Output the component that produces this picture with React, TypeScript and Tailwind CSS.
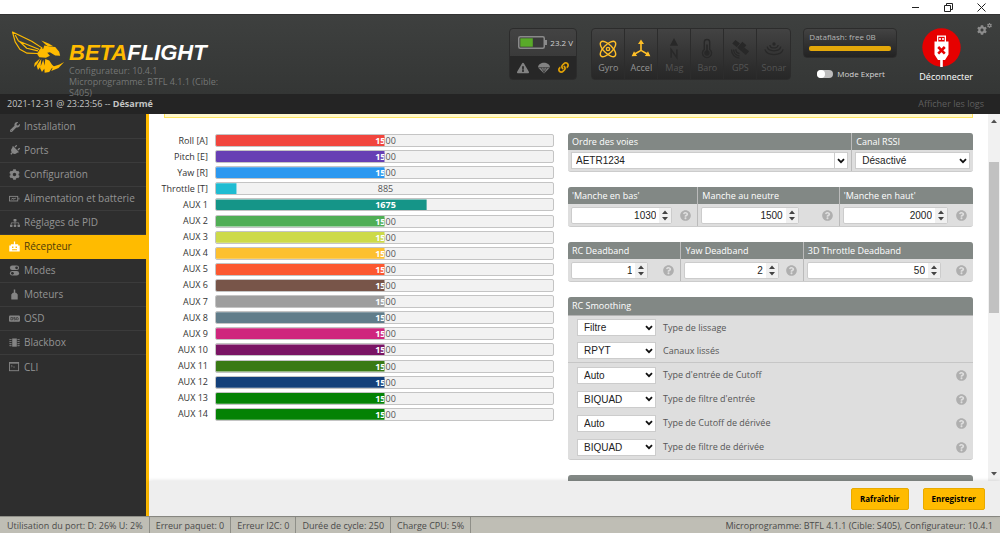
import { useState } from 'react'
import type { ReactNode } from 'react'
import { FaCog, FaExclamationTriangle, FaLink, FaPlug, FaQuestionCircle, FaSitemap, FaWrench } from 'react-icons/fa'

const CHANNEL_MIN = 800
const CHANNEL_MAX = 2200

const CHANNELS = [
  { name: 'Roll [A]', value: 1500, color: '#f1453d' },
  { name: 'Pitch [E]', value: 1500, color: '#673fb4' },
  { name: 'Yaw [R]', value: 1500, color: '#2b98f0' },
  { name: 'Throttle [T]', value: 885, color: '#1fbcd2' },
  { name: 'AUX 1', value: 1675, color: '#159588' },
  { name: 'AUX 2', value: 1500, color: '#50ae55' },
  { name: 'AUX 3', value: 1500, color: '#cdda49' },
  { name: 'AUX 4', value: 1500, color: '#fdc02f' },
  { name: 'AUX 5', value: 1500, color: '#fc5830' },
  { name: 'AUX 6', value: 1500, color: '#785549' },
  { name: 'AUX 7', value: 1500, color: '#9e9e9e' },
  { name: 'AUX 8', value: 1500, color: '#617d8a' },
  { name: 'AUX 9', value: 1500, color: '#cf267d' },
  { name: 'AUX 10', value: 1500, color: '#7a1464' },
  { name: 'AUX 11', value: 1500, color: '#3a7a14' },
  { name: 'AUX 12', value: 1500, color: '#14407a' },
  { name: 'AUX 13', value: 1500, color: '#048204' },
  { name: 'AUX 14', value: 1500, color: '#048204' },
]

function BatteryTabIcon() {
  return (
    <svg viewBox="0 0 12 8" className="w-full" fill="none" stroke="currentColor">
      <rect x="0.5" y="1.5" width="9" height="5" />
      <path d="M10.8 3v2M2.5 4.6l2-1.2v1.2l3-1.2" />
    </svg>
  )
}

function ReceiverIcon() {
  return (
    <svg viewBox="0 0 12 12" className="w-full" fill="currentColor">
      <path d="M5.300 0.500h1.400V3.500H10v1.500h1.700v6.500H0.300V5H2V3.500h3.300z" />
      <path d="M3.300 6h1.500v1.500H3.300zM7.200 6h1.500v1.500H7.200zM3.300 9h5.400v1H3.300z" fill="#ffbb00" />
    </svg>
  )
}

function ModesIcon() {
  return (
    <svg viewBox="0 0 12 12" className="w-full">
      <rect x="1" y="0.5" width="10" height="5" rx="2.500" fill="currentColor" />
      <rect x="1" y="6.500" width="10" height="5" rx="2.500" fill="currentColor" />
      <circle cx="8.300" cy="3" r="1.500" fill="#2e2e2e" />
      <circle cx="3.700" cy="9" r="1.500" fill="#2e2e2e" />
    </svg>
  )
}

function MotorIcon() {
  return (
    <svg viewBox="0 0 12 12" className="w-full" fill="currentColor">
      <path d="M5.200 0.500h1.600v3.500h1l1.700 2v5.500h-7V6l1.700-2h1z" />
    </svg>
  )
}

function OsdIcon() {
  return (
    <svg viewBox="0 0 12 8" className="w-full">
      <rect x="0" y="0.500" width="12" height="7" rx="1.200" fill="currentColor" />
      <path d="M2 2.700h2v2.600H2zM7 2.700H5.200V4H7v1.300H5.200M8.300 2.700v2.600h1.200l.6-.6V3.300l-.6-.6z" fill="none" stroke="#2e2e2e" strokeWidth="0.700" />
    </svg>
  )
}

function BlackboxIcon() {
  return (
    <svg viewBox="0 0 12 10" className="w-full">
      <rect x="3.500" y="0.500" width="5" height="9" fill="currentColor" />
      <path d="M2 1v8M10 1v8" stroke="currentColor" strokeWidth="1.400" strokeDasharray="1.300 0.900" />
      <path d="M0.500 1v8M11.500 1v8" stroke="currentColor" strokeWidth="0.600" strokeDasharray="1.300 0.900" />
    </svg>
  )
}

function CliIcon() {
  return (
    <svg viewBox="0 0 12 10" className="w-full" fill="none" stroke="currentColor">
      <rect x="0.500" y="0.500" width="10" height="9" />
      <path d="M0.500 1.300h10" />
      <path d="M2.300 3.500l1.400 1-1.400 1M4.500 5.500h2" strokeWidth="0.700" />
    </svg>
  )
}

const TABS: { label: string; icon: ReactNode }[] = [
  { label: 'Installation', icon: <FaWrench /> },
  { label: 'Ports', icon: <FaPlug className="size-[11px] rotate-45" /> },
  { label: 'Configuration', icon: <FaCog className="size-[11px]" /> },
  { label: 'Alimentation et batterie', icon: <BatteryTabIcon /> },
  { label: 'Réglages de PID', icon: <FaSitemap /> },
  { label: 'Récepteur', icon: <ReceiverIcon /> },
  { label: 'Modes', icon: <ModesIcon /> },
  { label: 'Moteurs', icon: <MotorIcon /> },
  { label: 'OSD', icon: <OsdIcon /> },
  { label: 'Blackbox', icon: <BlackboxIcon /> },
  { label: 'CLI', icon: <CliIcon /> },
]

const SENSORS: { label: string; on: boolean; icon: ReactNode }[] = [
  {
    label: 'Gyro',
    on: true,
    icon: (
      <>
        <ellipse cx="10" cy="10" rx="11" ry="4.800" transform="rotate(45 10 10)" />
        <ellipse cx="10" cy="10" rx="11" ry="4.800" transform="rotate(-45 10 10)" />
        <circle cx="10" cy="10" r="1.800" />
      </>
    ),
  },
  {
    label: 'Accel',
    on: true,
    icon: (
      <>
        <path d="M10 3v8.500M10 11.500l-7 4M10 11.500l7 4" strokeWidth="1.800" />
        <path d="M10 -0.500l3.300 5H6.700zM-0.300 18l2.600-5.400 3.400 5.200zM20.300 18l-2.600-5.400-3.400 5.200z" fill="currentColor" stroke="none" />
      </>
    ),
  },
  {
    label: 'Mag',
    on: false,
    icon: (
      <>
        <path d="M10 -2l4.500 8.500h-9z" fill="currentColor" stroke="none" />
        <path d="M6.800 19.500v-9l6.400 9v-9" strokeWidth="1.600" />
      </>
    ),
  },
  {
    label: 'Baro',
    on: false,
    icon: (
      <>
        <path d="M7 10.500V2.500a3 3 0 0 1 6 0v8a5 5 0 1 1-6 0z" />
        <circle cx="10" cy="14.500" r="3" fill="currentColor" stroke="none" />
        <path d="M10 5v9" strokeWidth="1.800" />
      </>
    ),
  },
  {
    label: 'GPS',
    on: false,
    icon: (
      <>
        <path d="M5 0l5 4-3.500 4-5-4zM15 8.500l5 4-3.500 4-5-4zM12.500 2l4.500 4-5.500 6.500-4.500-4z" fill="currentColor" stroke="none" />
        <path d="M5.500 10.500a4 4 0 0 0 4 4.500M3 10.500a7 7 0 0 0 6.500 7.200M0.700 10.500a9 9 0 0 0 8.800 9.500" />
      </>
    ),
  },
  {
    label: 'Sonar',
    on: false,
    icon: (
      <>
        <ellipse cx="10" cy="4.500" rx="1.800" ry="2" fill="currentColor" stroke="none" />
        <path d="M5.500 5.500c0 4.500 9 4.500 9 0M2.500 7.500c1 6 14 6 15 0M0 10.500c2 7.500 18 7.500 20 0" strokeWidth="1.400" />
      </>
    ),
  },
]

function BeeLogo() {
  return (
    <svg viewBox="33 92 162 130" className="h-[43px] w-[54px] shrink-0" fill="#ffbb00">
      <path
        d="M37 95l58 28 31 20-13 17-32-1-22-12-14-22zM45 104l10 18 63 26M56 122l24 22 34 8"
        fill="none"
        stroke="#ffbb00"
        strokeWidth="3.500"
        strokeLinejoin="round"
      />
      <path d="M124 121l22 9 14 8h-16l-8-6z" />
      <path d="M133 136l17 3 16 1 12 15 3 12-15-1-16-10-8 2 8 9-12 6-20-2-6-8 10-18 8 1z" />
      <path d="M120 175l-16 14-2 12 10-10zM124 177l-14 20 4 13 8-11zM130 179l-10 25 6 12 9-13zM136 177l-3 26 1 15 14-2 8-12 8-3-8-8-8-12zM160 199l-6 14 22-9 17-18-14 7z" />
    </svg>
  )
}

function Help() {
  return (
    <button type="button" aria-label="Aide" className="shrink-0 text-[#afafaf]">
      <FaQuestionCircle className="size-[11px]" />
    </button>
  )
}

function Chevron() {
  return (
    <svg viewBox="0 0 8 6" className="h-[6px] w-2" fill="none" stroke="#111" strokeWidth="1.800">
      <path d="M1 1.200l3 3 3-3" />
    </svg>
  )
}

function Select({ label, value, className = '' }: { label: string; value: string; className?: string }) {
  return (
    <div className={`relative flex items-center ${className}`}>
      <select
        aria-label={label}
        className="h-[17px] w-full appearance-none border border-[#ccc] bg-white pl-1.5 font-['Liberation_Sans',Arial,sans-serif] text-[10px] leading-[15px] text-[#222]"
      >
        <option>{value}</option>
      </select>
      <span className="pointer-events-none absolute right-[3px]">
        <Chevron />
      </span>
    </div>
  )
}

function NumberField({ label, initial, gap }: { label: string; initial: number; gap: string }) {
  const [value, setValue] = useState(initial)
  return (
    <div className={`flex h-[22px] items-center pr-1.5 pl-[3px] ${gap}`}>
      <div className="flex h-[17px] min-w-0 flex-1 rounded-[2px] border border-[#ccc] bg-white">
        <input
          type="number"
          aria-label={label}
          value={value}
          onChange={(e) => setValue(Number(e.target.value))}
          className="w-0 min-w-0 flex-1 pr-[3px] text-right font-['Liberation_Sans',Arial,sans-serif] text-[10px] leading-[15px] text-[#222] [appearance:textfield] [&::-webkit-inner-spin-button]:appearance-none"
        />
        <svg viewBox="0 0 12 14" className="w-3 shrink-0 bg-[#f0f0f0]" fill="#444">
          <path d="M3 5.500L6 2l3 3.500zM3 8.500L6 12l3-3.500z" />
        </svg>
      </div>
      <Help />
    </div>
  )
}

function Column({ title, className, children }: { title: string; className: string; children: ReactNode }) {
  return (
    <div className={`min-w-0 border-r border-[#bbb] last:border-r-0 ${className}`}>
      <div className="h-[17px] truncate bg-[#828885] pl-1 text-[9px] leading-[17px] text-white">{title}</div>
      {children}
    </div>
  )
}

const PANEL = 'overflow-hidden rounded-[3px] border-b border-[#ccc] bg-[#dedede]'

function SmoothingRow({ value, label, help, className }: { value: string; label: string; help?: boolean; className: string }) {
  return (
    <div className={`flex items-center gap-[7px] pr-1.5 pl-[9px] ${className}`}>
      <Select label={label} value={value} className="w-[79px]" />
      <span className="flex-1 text-[9px] text-[#555]">{label}</span>
      {help && <Help />}
    </div>
  )
}

function ChannelBars() {
  return (
    <div className="mt-px flex h-[287px] flex-col justify-between text-[9px] leading-3">
      {CHANNELS.map((c) => {
        const pct = ((c.value - CHANNEL_MIN) / (CHANNEL_MAX - CHANNEL_MIN)) * 100
        return (
          <div key={c.name} className="flex h-[13px] items-center">
            <span className="flex w-[51px] shrink-0 justify-end pr-[7px] whitespace-nowrap text-[#333]">{c.name}</span>
            <div className="relative h-[13px] flex-1 rounded-[2px] border border-[#c4c4c4] bg-[#f2f2f2] pl-0.5 text-center text-[#555]">
              {c.value}
              <div
                className="absolute inset-0 rounded-[1px] pl-0.5 font-bold text-white"
                style={{ backgroundColor: c.color, clipPath: `inset(0 ${100 - pct}% 0 0)` }}
              >
                {c.value}
              </div>
            </div>
          </div>
        )
      })}
    </div>
  )
}

function Header() {
  return (
    <header className="relative z-10 flex h-20 shrink-0 items-start border-t border-[#333] bg-linear-to-b from-[#3e403f] to-[#343635] pl-[11px]">
      <div className="pt-4">
        <BeeLogo />
      </div>
      <div className="ml-1 w-[155px] pt-[26px]">
        <div className="font-['Liberation_Sans',Arial,sans-serif] text-[22px] leading-6 font-bold text-white italic">
          <span className="text-[#ffbb00]">BETA</span>FLIGHT
        </div>
        <div className="text-[9px] leading-[11px] text-[#747675]">
          Configurateur: 10.4.1
          <br />
          Microprogramme: BTFL 4.1.1 (Cible: S405)
        </div>
      </div>

      <div className="mt-[13px] ml-auto h-[52px] w-[68px] overflow-hidden rounded-[4px] border border-[#2c2c2c] bg-linear-to-b from-[#434343] to-[#333]">
        <div className="flex h-[27px] items-center gap-[3px] pl-2 text-[8px] text-[#d0d0d0]">
          <svg viewBox="0 0 29 13" className="h-[13px] w-[29px] shrink-0">
            <rect x="0.750" y="0.750" width="25.500" height="11.500" rx="1.500" fill="#3a3a3a" stroke="#8a8a8a" strokeWidth="1.500" />
            <rect x="27" y="4" width="2" height="5" fill="#8a8a8a" />
            <rect x="2.300" y="2.300" width="12.500" height="8.400" fill="#59aa29" />
          </svg>
          <span className="whitespace-nowrap">23.2 V</span>
        </div>
        <div className="flex h-[23px] items-center justify-between bg-[#272727] px-[7px] text-[#828282]">
          <FaExclamationTriangle className="size-3" />
          <svg viewBox="0 0 12 12" className="size-3" fill="currentColor">
            <path d="M0 5.500C0.500-0.700 11.500-0.700 12 5.500L6 11.500z" />
            <path d="M3 5.500l3 5M6 5.500v5M9 5.500l-3 5M0 5.700h12" stroke="#272727" strokeWidth="0.600" />
          </svg>
          <FaLink className="size-[11px] text-[#e0a006]" />
        </div>
      </div>

      <div className="mt-[13px] ml-3.5 flex h-[52px] overflow-hidden rounded-[4px] border border-[#2c2c2c] bg-linear-to-b from-[#434343] to-[#272727]">
        {SENSORS.map((s) => (
          <div key={s.label} className="flex w-[33px] flex-col items-center border-r border-[#2c2c2c] pt-2.5 last:border-r-0">
            <svg
              viewBox="-1 -1 22 22"
              className={`size-5 overflow-visible ${s.on ? 'text-[#ffbf27]' : 'text-[#282828]'}`}
              fill="none"
              stroke="currentColor"
              strokeWidth="1.500"
            >
              {s.icon}
            </svg>
            <span className={`text-[9px] leading-[18px] ${s.on ? 'text-[#949494]' : 'text-[#545454]'}`}>{s.label}</span>
          </div>
        ))}
      </div>

      <div className="mt-[13px] ml-3 w-[94px]">
        <div className="h-[30px] rounded-[4px] border border-[#2c2c2c] bg-linear-to-b from-[#434343] to-[#232323] px-[5px] pt-0.5">
          <div className="text-[8px] leading-3 whitespace-nowrap text-[#b5b5b5]">Dataflash: free 0B</div>
          <div className="mt-[3px] h-[5px] rounded-[2px] bg-[#e4a80a]" />
        </div>
        <label className="mt-2.5 flex items-center gap-1 pl-3.5 text-[8px] leading-3 text-[#d6d6d6]">
          <input type="checkbox" className="peer sr-only" />
          <span className="flex h-2 w-4 items-center rounded-full bg-[#bdbdbd]">
            <span className="size-2 rounded-full bg-white" />
          </span>
          Mode Expert
        </label>
      </div>

      <button type="button" className="mt-[13px] ml-[22px] flex flex-col items-start">
        <svg viewBox="0 0 39 39" className="ml-[3px] size-[39px]">
          <circle cx="19.500" cy="19.500" r="19.200" fill="#e60000" />
          <path d="M15 7.500h9v6h2.500v13l-3.500 5.500h-2.200v7h-2.600v-7H16l-3.500-5.500v-13H15z" fill="#fff" />
          <path d="M16.300 8.800h6.400v4.700h-6.400z" fill="#e60000" />
          <path d="M17.200 10h1.600v2h-1.600zM20.200 10h1.600v2h-1.600z" fill="#fff" />
          <path d="M16.200 19l6.600 6.600M22.800 19l-6.600 6.600" stroke="#e60000" strokeWidth="2.600" />
        </svg>
        <span className="mt-1 text-[9px] leading-3 text-white">Déconnecter</span>
      </button>
      <button type="button" aria-label="Options" className="mt-2 mr-2 ml-1 flex text-[#8c8c8c]">
        <FaCog className="mt-0.5 size-2.5" />
        <FaCog className="size-[5px]" />
      </button>
    </header>
  )
}

export default function App() {
  const [active, setActive] = useState('Récepteur')

  return (
    <div className="flex h-screen flex-col overflow-hidden bg-white font-['Open_Sans',sans-serif] text-[#333]">
      <div className="flex h-3.5 shrink-0 items-center justify-end gap-6 pr-3.5 text-[#222]">
        <button type="button" aria-label="Réduire">
          <svg viewBox="0 0 9 9" className="size-[9px]" fill="none" stroke="currentColor">
            <path d="M1 4.500h7" />
          </svg>
        </button>
        <button type="button" aria-label="Restaurer">
          <svg viewBox="0 0 9 9" className="size-[9px]" fill="none" stroke="currentColor">
            <path d="M0.500 2.500h6v6h-6zM2.500 2.500v-2h6v6h-2" />
          </svg>
        </button>
        <button type="button" aria-label="Fermer">
          <svg viewBox="0 0 9 9" className="size-[9px]" fill="none" stroke="currentColor">
            <path d="M0.500 0.500l8 8M8.500 0.500l-8 8" />
          </svg>
        </button>
      </div>

      <Header />

      <div className="flex h-5 shrink-0 items-center justify-between bg-[#242424] pr-4 pl-[7px] text-[9px] leading-3 text-[#c4c4c4]">
        <span>
          2021-12-31 @ 23:23:56 -- <b>Désarmé</b>
        </span>
        <a href="#logs" className="text-[#5f5f5f]">
          Afficher les logs
        </a>
      </div>

      <div className="flex min-h-0 flex-1">
        <nav className="w-[149px] shrink-0 border-r-[3px] border-[#ffbb00] bg-[#2e2e2e] pt-px">
          {TABS.map((tab) => (
            <a
              key={tab.label}
              href="#tab"
              onClick={() => setActive(tab.label)}
              className={`flex h-6 items-center gap-1 border-b pl-[9px] text-[10px] whitespace-nowrap last:border-b-0 ${
                tab.label === active
                  ? 'border-[#ffbb00] bg-[#ffbb00] text-[#4d3a0a]'
                  : 'border-[#3b3b3b] text-[#949494]'
              }`}
            >
              <span className={`flex w-[11px] justify-center ${tab.label === active ? 'text-white' : 'text-[#858585]'}`}>
                {tab.icon}
              </span>
              {tab.label}
            </a>
          ))}
        </nav>

        <main className="flex min-w-0 flex-1 flex-col">
          <div className="flex min-h-0 flex-1">
            <div className="min-w-0 flex-1 overflow-hidden px-[15px]">
              <div className="h-1 border-x border-b border-[#ffe55f] bg-[#fff7cd]" />

              <div className="grid grid-cols-[390fr_405fr] gap-3.5 pt-[15px]">
                <ChannelBars />

                <div className="flex flex-col gap-[15px]">
                  <div className={`flex ${PANEL}`}>
                    <Column title="Ordre des voies" className="flex-[284]">
                      <div className="px-[3px] py-0.5">
                        <div className="flex h-[17px] border border-[#ccc] bg-white">
                          <input
                            aria-label="Ordre des voies"
                            defaultValue="AETR1234"
                            className="min-w-0 flex-1 pl-1 font-['Liberation_Sans',Arial,sans-serif] text-[10px] text-[#222]"
                          />
                          <button type="button" aria-label="Choisir" className="flex w-[13px] items-center justify-center border-l border-[#ccc]">
                            <Chevron />
                          </button>
                        </div>
                      </div>
                    </Column>
                    <Column title="Canal RSSI" className="flex-[121]">
                      <div className="px-[3px] py-0.5">
                        <Select label="Canal RSSI" value="Désactivé" />
                      </div>
                    </Column>
                  </div>

                  <div className={`flex ${PANEL}`}>
                    <Column title="'Manche en bas'" className="flex-[130]">
                      <NumberField label="Manche en bas" initial={1030} gap="gap-2" />
                    </Column>
                    <Column title="Manche au neutre" className="flex-[141]">
                      <NumberField label="Manche au neutre" initial={1500} gap="gap-[23px]" />
                    </Column>
                    <Column title="'Manche en haut'" className="flex-[134]">
                      <NumberField label="Manche en haut" initial={2000} gap="gap-2" />
                    </Column>
                  </div>

                  <div className={`flex ${PANEL}`}>
                    <Column title="RC Deadband" className="flex-[113]">
                      <NumberField label="RC Deadband" initial={1} gap="gap-[15px]" />
                    </Column>
                    <Column title="Yaw Deadband" className="flex-[122]">
                      <NumberField label="Yaw Deadband" initial={2} gap="gap-[7px]" />
                    </Column>
                    <Column title="3D Throttle Deadband" className="flex-[170]">
                      <NumberField label="3D Throttle Deadband" initial={50} gap="gap-[15px]" />
                    </Column>
                  </div>

                  <div className={PANEL}>
                    <h2 className="border-b border-[#b3b3b3] bg-[#828885] pl-1 text-[9px] leading-[18px] text-white">RC Smoothing</h2>
                    <SmoothingRow value="Filtre" label="Type de lissage" className="h-[23px]" />
                    <SmoothingRow value="RPYT" label="Canaux lissés" className="h-[23px]" />
                    <div className="border-t border-[#c6c6c6]">
                      <SmoothingRow value="Auto" label="Type d'entrée de Cutoff" help className="h-6" />
                      <SmoothingRow value="BIQUAD" label="Type de filtre d'entrée" help className="h-6" />
                      <SmoothingRow value="Auto" label="Type de Cutoff de dérivée" help className="h-6" />
                      <SmoothingRow value="BIQUAD" label="Type de filtre de dérivée" help className="h-6" />
                    </div>
                  </div>

                  <div className="h-[18px] rounded-t-[3px] bg-[#828885]" />
                </div>
              </div>
            </div>

            <div className="flex w-3 shrink-0 flex-col items-center bg-[#f1f1f1] py-1">
              <svg viewBox="0 0 6 4" className="mb-[38px] h-1.5 w-1.5 shrink-0" fill="#505050">
                <path d="M0 4l3-3.500 3 3.500z" />
              </svg>
              <div className="w-2.5 flex-[151] bg-[#c1c1c1]" />
              <div className="flex-[157]" />
              <svg viewBox="0 0 6 4" className="h-1.5 w-1.5 shrink-0" fill="#505050">
                <path d="M0 0l3 3.500 3-3.500z" />
              </svg>
            </div>
          </div>

          <div className="relative flex h-[35px] shrink-0 items-center justify-end gap-3.5 bg-[#eee] pt-px pr-[15px] shadow-[0_0_4px_rgba(0,0,0,0.15)]">
            {['Rafraîchir', 'Enregistrer'].map((label) => (
              <button
                key={label}
                type="button"
                className="h-[22px] rounded-[2px] border border-[#e8aa00] bg-[#ffbb00] px-2 text-[8px] font-bold text-black"
              >
                {label}
              </button>
            ))}
          </div>
        </main>
      </div>

      <footer className="flex h-[17px] shrink-0 items-stretch border-t border-[#8f8f88] bg-[#bfbeb5] pl-px text-[9px] leading-[17px] whitespace-nowrap text-[#4a4a4a]">
        {['Utilisation du port: D: 26% U: 2%', 'Erreur paquet: 0', 'Erreur I2C: 0', 'Durée de cycle: 250', 'Charge CPU: 5%'].map((t) => (
          <span key={t} className="border-r border-[#8f8f88] px-1.5">
            {t}
          </span>
        ))}
        <span className="ml-auto pr-[7px]">Microprogramme: BTFL 4.1.1 (Cible: S405), Configurateur: 10.4.1</span>
      </footer>
    </div>
  )
}
